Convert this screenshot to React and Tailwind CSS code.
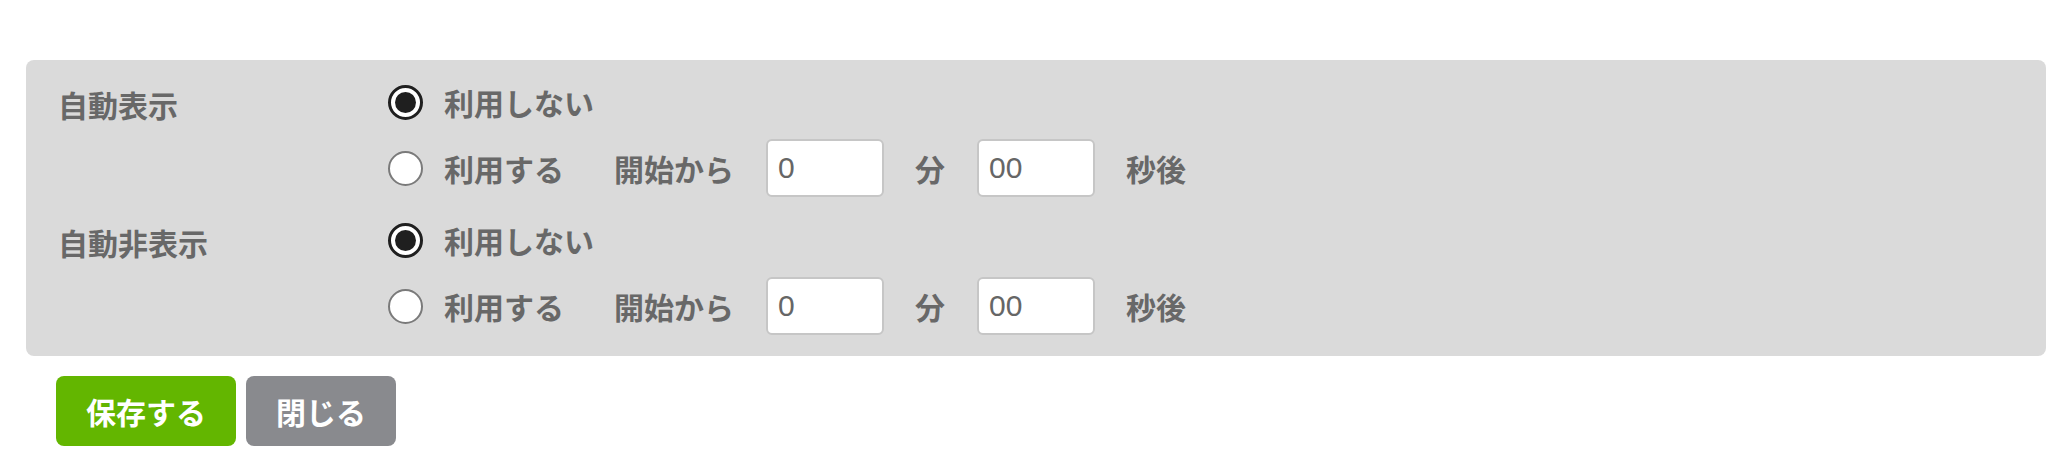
import { useState } from 'react';

const font = { fontFamily: '"Noto Sans CJK JP", "Noto Sans", sans-serif' };

function Radio({ checked, onChange }) {
  return (
    <button
      type="button"
      onClick={onChange}
      className={
        checked
          ? 'w-[35px] h-[35px] rounded-full border-[3px] border-[#1f1f1f] bg-white flex items-center justify-center shrink-0'
          : 'w-[35px] h-[35px] rounded-full border-2 border-[#7a7a7a] bg-white shrink-0'
      }
    >
      {checked && <span className="block w-[21px] h-[21px] rounded-full bg-[#1f1f1f]" />}
    </button>
  );
}

function TimeInput({ value, onChange }) {
  return (
    <input
      type="text"
      value={value}
      onChange={(e) => onChange(e.target.value)}
      className="w-[118px] h-[58px] rounded-[6px] border-2 border-[#c6c6c6] bg-white pl-[10px] text-[30px] text-[#666] outline-none font-['Liberation_Sans',sans-serif] font-normal"
    />
  );
}

function AutoRow({ label, setting, onChange }) {
  return (
    <div className="flex">
      <div className="w-[330px] shrink-0 h-[40px] flex items-center text-[30px] pt-[4px]">{label}</div>
      <div className="flex flex-col gap-[17px]">
        <div className="h-[40px] flex items-center">
          <Radio checked={!setting.use} onChange={() => onChange({ ...setting, use: false })} />
          <span className="ml-[21px] text-[30px]">利用しない</span>
        </div>
        <div className="h-[58px] flex items-center">
          <Radio checked={setting.use} onChange={() => onChange({ ...setting, use: true })} />
          <span className="ml-[21px] text-[30px]">利用する</span>
          <span className="ml-[50px] text-[30px]">開始から</span>
          <span className="ml-[32px]">
            <TimeInput value={setting.min} onChange={(v) => onChange({ ...setting, min: v })} />
          </span>
          <span className="ml-[31px] text-[30px]">分</span>
          <span className="ml-[32px]">
            <TimeInput value={setting.sec} onChange={(v) => onChange({ ...setting, sec: v })} />
          </span>
          <span className="ml-[31px] text-[30px]">秒後</span>
        </div>
      </div>
    </div>
  );
}

export default function App() {
  const [show, setShow] = useState({ use: false, min: '0', sec: '00' });
  const [hide, setHide] = useState({ use: false, min: '0', sec: '00' });

  return (
    <div className="bg-white w-[2068px] h-[458px] pt-[60px] pl-[26px] pr-[22px]" style={font}>
      <div className="bg-[#dadada] rounded-[8px] pl-[32px] pt-[22px] pb-[21px] flex flex-col gap-[23px] font-bold text-[#686868]">
        <AutoRow label="自動表示" setting={show} onChange={setShow} />
        <AutoRow label="自動非表示" setting={hide} onChange={setHide} />
      </div>
      <div className="flex gap-[10px] mt-[20px] ml-[30px]">
        <button className="h-[70px] w-[180px] rounded-[8px] bg-[#63b600] text-white text-[30px] font-bold">保存する</button>
        <button className="h-[70px] w-[150px] rounded-[8px] bg-[#898a8e] text-white text-[30px] font-bold">閉じる</button>
      </div>
    </div>
  );
}
